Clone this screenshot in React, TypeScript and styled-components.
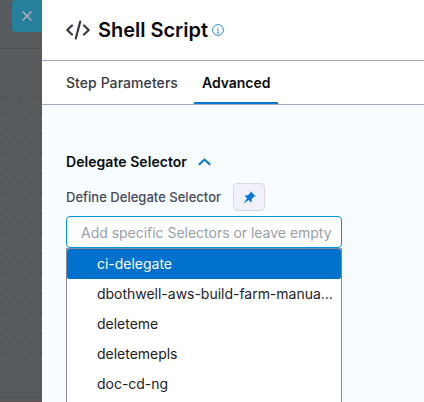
import React from 'react';
import styled, { createGlobalStyle } from 'styled-components';

const GlobalStyle = createGlobalStyle`
  * { box-sizing: border-box; }
  body {
    margin: 0;
    overflow: hidden;
    font-family: Inter, "Liberation Sans", sans-serif;
    background: #fff;
  }
`;

const Page = styled.div`
  display: flex;
  width: 424px;
  height: 402px;
  overflow: hidden;
`;

const Backdrop = styled.aside`
  display: flex;
  flex-direction: column;
  width: 42px;
  flex: none;
  background: #575b5e;
`;

const BackdropHeader = styled.div`
  display: flex;
  justify-content: flex-end;
  align-items: flex-start;
  flex: none;
  height: 49px;
  border-bottom: 1px solid #4b4d50;
`;

const CloseButton = styled.button`
  display: flex;
  align-items: center;
  justify-content: center;
  width: 30px;
  height: 32px;
  padding: 0;
  border: 0;
  border-radius: 4px 0 0 4px;
  background: #267f9b;
`;

const BackdropToolbar = styled.div`
  flex: none;
  height: 49px;
  border-bottom: 1px solid #4f5256;
`;

const DotCanvas = styled.div`
  flex: none;
  height: 260px;
  background: conic-gradient(from 90deg at 9px 9px, #3f4346 90deg, transparent 0) 1px 6px / 10px 10px;
`;

const BackdropFooter = styled.div`
  flex: 1;
  margin-top: 39px;
  border-top: 1px solid #4d5053;
  border-bottom: 1px solid #5b4a52;
`;

const Panel = styled.main`
  display: flex;
  flex-direction: column;
  flex: 1;
  min-width: 0;
  background: #f6fcff;
`;

const Header = styled.header`
  display: flex;
  flex: none;
  align-items: center;
  height: 61px;
  padding: 0 24px;
  border-bottom: 1px solid #a8a8c0;
  background: #fff;
`;

const Title = styled.h1`
  margin: 0 4px 0 8px;
  font-size: 20px;
  font-weight: 600;
  line-height: 28px;
  letter-spacing: -0.02px;
  color: #0b0b0d;
  white-space: nowrap;
`;

const Tabs = styled.nav`
  display: flex;
  flex: none;
  height: 44px;
  padding: 0 16px;
  border-bottom: 1px solid #a8a8c0;
  background: #fff;
`;

const Tab = styled.div<{ $active?: boolean }>`
  padding: 12px 8px 0;
  margin-right: 8px;
  height: 43px;
  font-size: 14px;
  line-height: 20px;
  letter-spacing: ${(p) => (p.$active ? '-0.03px' : '0.07px')};
  white-space: nowrap;
  font-weight: ${(p) => (p.$active ? 600 : 500)};
  color: ${(p) => (p.$active ? '#0b0b0d' : '#383946')};
  border-bottom: 2px solid ${(p) => (p.$active ? '#0278d5' : 'transparent')};
`;

const Body = styled.section`
  display: flex;
  flex: none;
  flex-direction: column;
  padding: 47px 24px 0;
`;

const SectionHeading = styled.div`
  display: flex;
  align-items: center;
  height: 20px;
  gap: 11px;
  font-size: 14px;
  font-weight: 600;
  letter-spacing: 0.05px;
  color: #0b0b0d;
  white-space: nowrap;
`;

const HeadingText = styled.span`
  margin-top: -1px;
`;

const FieldLabel = styled.div`
  display: flex;
  align-items: center;
  height: 28px;
  margin-top: 11px;
  font-size: 13px;
  font-weight: 500;
  letter-spacing: 0.02px;
  color: #484a5a;
  white-space: nowrap;
`;

const LabelText = styled.span`
  width: 167px;
`;

const PinButton = styled.button`
  display: flex;
  align-items: center;
  justify-content: center;
  width: 32px;
  height: 28px;
  padding: 0;
  border: 1px solid #d9dae5;
  border-radius: 4px;
  background: #f2f1fb;
`;

const SelectorInput = styled.input`
  width: 276px;
  height: 32px;
  margin-top: 5px;
  padding: 1px 0 0 14px;
  border: 1px solid #0092e4;
  border-radius: 4px;
  outline: 0;
  background: #fff;
  font: 400 14px Inter, "Liberation Sans", sans-serif;
  letter-spacing: -0.02px;
  &::placeholder { color: #97a1aa; opacity: 1; }
`;

const Options = styled.ul`
  width: 276px;
  height: 160px;
  margin: 0;
  padding: 0;
  list-style: none;
  border: 1px solid #8888a2;
  background: #fff;
`;

const Option = styled.li<{ $active?: boolean }>`
  height: 30px;
  padding: 0 6px 0 30px;
  font-size: 14px;
  line-height: 30px;
  letter-spacing: -0.02px;
  overflow: hidden;
  white-space: nowrap;
  text-overflow: ellipsis;
  border-radius: 2px;
  color: ${(p) => (p.$active ? '#fff' : '#1c2127')};
  background: ${(p) => (p.$active ? '#0072ce' : '#fff')};
`;

const options = ['ci-delegate', 'dbothwell-aws-build-farm-manua...', 'deleteme', 'deletemepls', 'doc-cd-ng'];

export default function App() {
  return (
    <>
      <GlobalStyle />
      <Page>
        <Backdrop>
          <BackdropHeader>
            <CloseButton aria-label="Close">
              <svg width="10" height="10" viewBox="0 0 10 10" stroke="#a2a9ad" strokeWidth="1.8">
                <path d="M.6.6 9.4 9.4M9.4.6.6 9.4" />
              </svg>
            </CloseButton>
          </BackdropHeader>
          <BackdropToolbar />
          <DotCanvas />
          <BackdropFooter />
        </Backdrop>
        <Panel>
          <Header>
            <svg width="24" height="20" viewBox="0 0 24 20" fill="none" stroke="#383946" strokeWidth="2.2" strokeLinecap="round" strokeLinejoin="round">
              <path d="M6 5.5 1.3 10 6 14.5M18 5.5 22.7 10 18 14.5M14.2 1.5 9.8 18.5" />
            </svg>
            <Title>Shell Script</Title>
            <svg width="12" height="12" viewBox="0 0 12 12" fill="none" stroke="#2a8cdb">
              <circle cx="6" cy="6" r="5.4" />
              <path d="M6 3v1.2M6 5.2V9M5 5.4h1M4.8 9h2.4" strokeWidth=".8" />
            </svg>
          </Header>
          <Tabs>
            <Tab>Step Parameters</Tab>
            <Tab $active>Advanced</Tab>
          </Tabs>
          <Body>
            <SectionHeading>
              <HeadingText>Delegate Selector</HeadingText>
              <svg width="13" height="8" viewBox="0 0 13 8" fill="none" stroke="#0278d5" strokeWidth="2">
                <path d="M.8 6.8 6.5 1.5l5.7 5.3" />
              </svg>
            </SectionHeading>
            <FieldLabel>
              <LabelText>Define Delegate Selector</LabelText>
              <PinButton aria-label="Fixed value">
                <svg width="13" height="13" viewBox="0 0 16 16" fill="#0278d5">
                  <path d="M9.4.4c-.5.5-.5 1.2-.3 2L5.7 5.6C4.4 5 2.9 5 1.9 5.9l3.1 3.1L.2 15.8l6.8-4.8 3.1 3.1c.9-1 .9-2.5.3-3.8l3.3-3.4c.7.2 1.4.2 1.9-.3L9.4.4z" />
                </svg>
              </PinButton>
            </FieldLabel>
            <SelectorInput placeholder="Add specific Selectors or leave empty" />
            <Options>
              {options.map((name, i) => (
                <Option key={name} $active={i === 0}>{name}</Option>
              ))}
            </Options>
          </Body>
        </Panel>
      </Page>
    </>
  );
}
